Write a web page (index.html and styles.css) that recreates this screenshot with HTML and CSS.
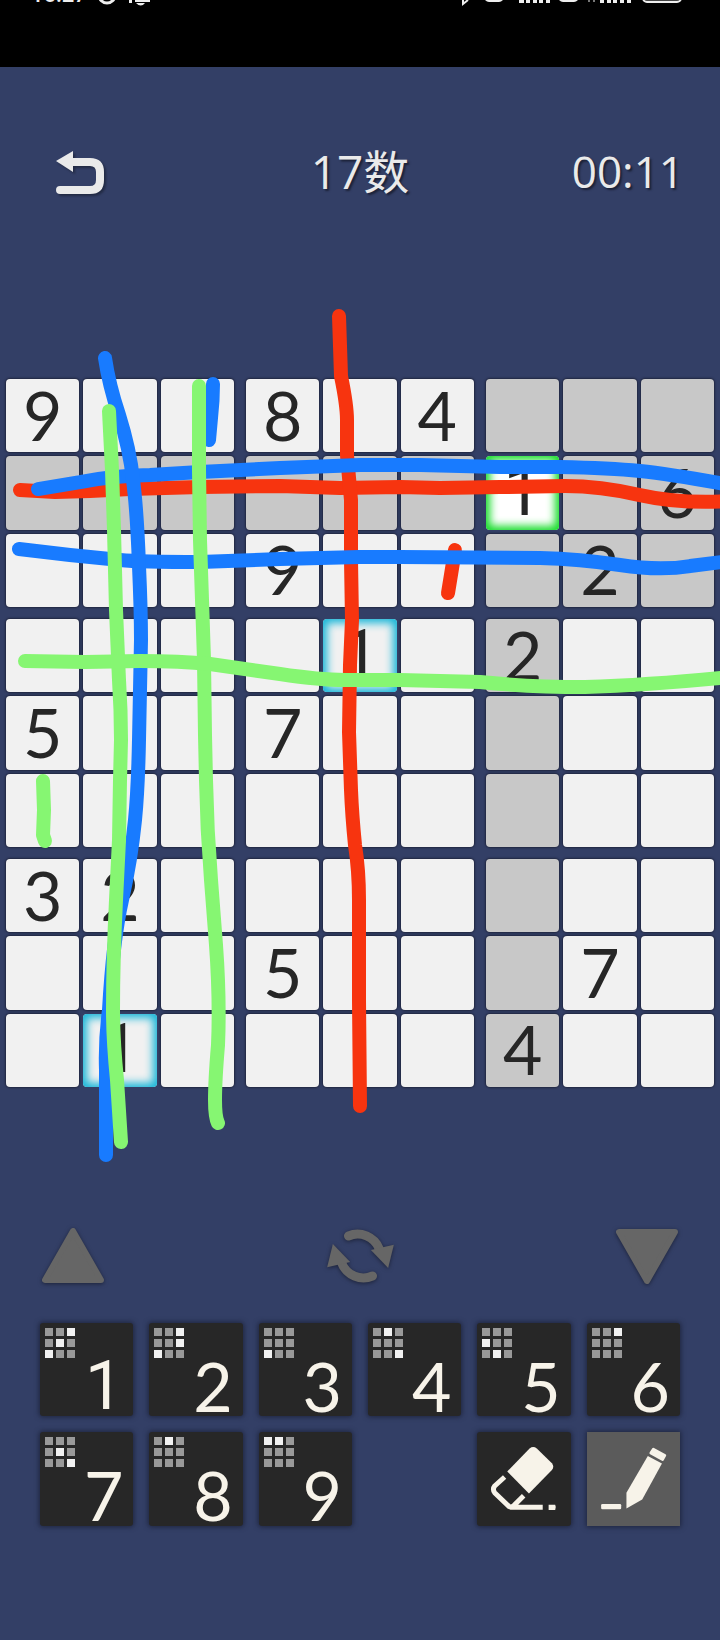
FILE: index.html
```
<!DOCTYPE html>
<html lang="zh">
<head>
    <meta charset="UTF-8">
    <meta name="viewport" content="width=device-width, initial-scale=1.0">
    <title>17数</title>
    <link rel="stylesheet" href="styles.css">
</head>
<body>
    <div class="status-bar">
        <div class="status-group">
            <span class="clock">16:27</span>
            <svg class="status-icons" width="60" height="8" viewBox="0 0 60 8">
                <circle cx="12" cy="-5" r="8" fill="none" stroke="#eee" stroke-width="3"/>
                <path d="M34 0h3v3h-3zM40 0h15v2H40z M41 3h9q-4 5-9 0z" fill="#eee"/>
            </svg>
        </div>
        <svg class="status-icons" width="222" height="8" viewBox="0 0 222 8">
            <path d="M3 0v4l5-4" fill="none" stroke="#eee" stroke-width="2"/>
            <path d="M25 0h18q-2 2-4 2H29q-2 0-4-2zM99 0h19q-2 2-4 2h-11q-2 0-4-2z" fill="#eee"/>
            <path d="M59 0h5v3h-5zM66 0h4v3h-4zM73 0h4v3h-4zM79 0h4v3h-4zM86 0h4v3h-4zM140 0h4v3h-4zM147 0h4v3h-4zM153 0h4v3h-4zM160 0h4v3h-4zM167 0h4v3h-4z" fill="#eee"/>
            <path d="M128 0h2v2h-2zM133 0h2v2h-2z" fill="#777"/>
            <rect x="183" y="-14" width="38" height="16" rx="4" fill="#444" stroke="#eee" stroke-width="2"/>
        </svg>
    </div>

    <header class="top-bar">
        <button class="back" aria-label="返回">
            <svg width="50" height="46" viewBox="0 0 50 46">
                <path d="M14 11H34Q44 11 44 21V29Q44 39 34 39H4" fill="none" stroke="currentColor" stroke-width="8" stroke-linecap="round"/>
                <path d="M0 10L17 0V21Z" fill="currentColor"/>
            </svg>
        </button>
        <h1 class="title">17数</h1>
        <span class="timer">00:11</span>
    </header>

    <main class="board-area">
        <div class="board">
            <div class="block">
                <button class="cell">9</button><button class="cell"></button><button class="cell"></button>
                <button class="cell shaded"></button><button class="cell shaded"></button><button class="cell shaded"></button>
                <button class="cell"></button><button class="cell"></button><button class="cell"></button>
            </div>
            <div class="block">
                <button class="cell">8</button><button class="cell"></button><button class="cell">4</button>
                <button class="cell shaded"></button><button class="cell shaded"></button><button class="cell shaded"></button>
                <button class="cell">9</button><button class="cell"></button><button class="cell"></button>
            </div>
            <div class="block">
                <button class="cell shaded"></button><button class="cell shaded"></button><button class="cell shaded"></button>
                <button class="cell selected one">1</button><button class="cell shaded"></button><button class="cell shaded">6</button>
                <button class="cell shaded"></button><button class="cell shaded">2</button><button class="cell shaded"></button>
            </div>

            <div class="block">
                <button class="cell"></button><button class="cell"></button><button class="cell"></button>
                <button class="cell">5</button><button class="cell"></button><button class="cell"></button>
                <button class="cell"></button><button class="cell"></button><button class="cell"></button>
            </div>
            <div class="block">
                <button class="cell"></button><button class="cell same one">1</button><button class="cell"></button>
                <button class="cell">7</button><button class="cell"></button><button class="cell"></button>
                <button class="cell"></button><button class="cell"></button><button class="cell"></button>
            </div>
            <div class="block">
                <button class="cell shaded">2</button><button class="cell"></button><button class="cell"></button>
                <button class="cell shaded"></button><button class="cell"></button><button class="cell"></button>
                <button class="cell shaded"></button><button class="cell"></button><button class="cell"></button>
            </div>

            <div class="block">
                <button class="cell">3</button><button class="cell">2</button><button class="cell"></button>
                <button class="cell"></button><button class="cell"></button><button class="cell"></button>
                <button class="cell"></button><button class="cell same one">1</button><button class="cell"></button>
            </div>
            <div class="block">
                <button class="cell"></button><button class="cell"></button><button class="cell"></button>
                <button class="cell">5</button><button class="cell"></button><button class="cell"></button>
                <button class="cell"></button><button class="cell"></button><button class="cell"></button>
            </div>
            <div class="block">
                <button class="cell shaded"></button><button class="cell"></button><button class="cell"></button>
                <button class="cell shaded"></button><button class="cell">7</button><button class="cell"></button>
                <button class="cell shaded">4</button><button class="cell"></button><button class="cell"></button>
            </div>
        </div>

        <!-- hand-drawn lines over the board -->
        <svg class="marks" viewBox="0 373 720 720">
            <g class="red">
                <path d="M20 490L55 492L90 491L130 489L200 487L280 486L340 488L400 487L440 488L500 487L565 486Q600 486 640 495T730 501"/>
                <path d="M339 316L341 376Q347 405 347 420V455L351 500V560L352 620L350 665L349 732L351 790Q352 815 355 845Q359 870 359 900V1000L360 1106"/>
                <path d="M455 550L448 593"/>
            </g>
            <g class="blue">
                <path d="M38 489L80 482Q110 476 150 475L200 472L280 468L360 465H420L500 467H560Q610 468 640 471T730 485"/>
                <path d="M19 549L70 555L120 560Q140 562 200 562L280 559L360 557H400L540 558Q580 559 620 565T690 566L730 561"/>
                <path d="M105 358Q109 385 119 415Q130 450 133 480Q137 510 139 566Q141 610 141 640L139 740Q138 790 135 820Q131 860 122 900Q113 940 109 1010Q105 1040 106 1070V1155"/>
                <path d="M213 384Q213 400 211 418L209 440"/>
            </g>
            <g class="green">
                <path d="M109 411L112 470L114 530L116 610L119 680Q121 710 121 740L120 780L119 840L116 900Q113 960 113 1010Q113 1040 117 1080L121 1142"/>
                <path d="M199 386V470L200 540L202 600L204 660L205 735L206 780Q207 830 211 880L216 945Q220 1000 218 1045Q215 1080 215 1100Q215 1117 218 1123"/>
                <path d="M43 781L44 810L43 835L45 841"/>
                <path d="M25 661L85 662L140 661Q180 661 210 664Q245 669 280 674Q320 680 345 680H400L480 682Q530 687 585 687Q650 685 730 677"/>
            </g>
        </svg>
    </main>

    <div class="tools">
        <button class="tool" aria-label="上一个">
            <svg width="64" height="56" viewBox="0 0 64 56">
                <path d="M32 3L4 52H60Z" fill="currentColor" stroke="currentColor" stroke-width="6" stroke-linejoin="round"/>
            </svg>
        </button>
        <button class="tool" aria-label="重置">
            <svg width="67" height="56" viewBox="0 0 200 168">
                <g id="arc">
                    <path d="M64 24A70 70 0 0 1 156 62" fill="none" stroke="currentColor" stroke-width="27" stroke-linecap="round"/>
                    <path d="M131 66L200 50L183 120Z" fill="currentColor"/>
                </g>
                <use href="#arc" transform="rotate(180 100 84)"/>
            </svg>
        </button>
        <button class="tool" aria-label="下一个">
            <svg width="64" height="56" viewBox="0 0 64 56">
                <path d="M32 53L4 4H60Z" fill="currentColor" stroke="currentColor" stroke-width="6" stroke-linejoin="round"/>
            </svg>
        </button>
    </div>

    <div class="keypad">
        <button class="key">
            <span class="mini"><i></i><i></i><i class="on"></i><i></i><i class="on"></i><i></i><i class="on"></i><i></i><i></i></span>
            <span class="num one">1</span>
        </button>
        <button class="key">
            <span class="mini"><i></i><i></i><i class="on"></i><i></i><i></i><i class="on"></i><i class="on"></i><i></i><i></i></span>
            <span class="num">2</span>
        </button>
        <button class="key">
            <span class="mini"><i></i><i></i><i></i><i></i><i></i><i></i><i class="on"></i><i></i><i></i></span>
            <span class="num">3</span>
        </button>
        <button class="key">
            <span class="mini"><i></i><i class="on"></i><i></i><i></i><i></i><i></i><i></i><i></i><i class="on"></i></span>
            <span class="num">4</span>
        </button>
        <button class="key">
            <span class="mini"><i></i><i></i><i></i><i class="on"></i><i></i><i></i><i></i><i class="on"></i><i></i></span>
            <span class="num">5</span>
        </button>
        <button class="key">
            <span class="mini"><i></i><i></i><i class="on"></i><i></i><i></i><i></i><i></i><i></i><i></i></span>
            <span class="num">6</span>
        </button>
        <button class="key">
            <span class="mini"><i></i><i></i><i></i><i></i><i class="on"></i><i></i><i></i><i></i><i class="on"></i></span>
            <span class="num">7</span>
        </button>
        <button class="key">
            <span class="mini"><i></i><i class="on"></i><i></i><i></i><i></i><i></i><i></i><i></i><i></i></span>
            <span class="num">8</span>
        </button>
        <button class="key">
            <span class="mini"><i class="on"></i><i class="on"></i><i></i><i></i><i></i><i></i><i></i><i></i><i></i></span>
            <span class="num">9</span>
        </button>
        <button class="key eraser" aria-label="橡皮">
            <svg viewBox="0 0 284 284">
                <path d="M92 120L160 50Q171 42 182 50L228 95Q236 106 228 116L158 187Z" fill="currentColor"/>
                <path d="M84 137L54 164Q46 174 54 185L98 227Q104 230 112 224L142 194M100 229H200" fill="none" stroke="currentColor" stroke-width="15"/>
                <path d="M218 221H238Q242 229 238 237H218Z" fill="currentColor"/>
            </svg>
        </button>
        <button class="key active" aria-label="铅笔">
            <svg viewBox="0 0 284 284">
                <path d="M185 73L228 96L168 205L120 233V185Z" fill="currentColor"/>
                <path d="M202 52L237 71L230 84L194 64Z" fill="currentColor" stroke="currentColor" stroke-width="8" stroke-linejoin="round"/>
                <rect x="43" y="219" width="61" height="16" rx="4" fill="currentColor"/>
            </svg>
        </button>
    </div>
</body>
</html>
```
FILE: styles.css
```
* {
    box-sizing: border-box;
}
body {
    margin: 0;
    min-height: 100vh;
    background-color: #333f66;
    font-family: Lato, "Noto Sans CJK SC", sans-serif;
    overflow-x: hidden;
}
button {
    border: none;
    padding: 0;
    margin: 0;
    background: none;
    font-family: inherit;
    cursor: pointer;
}
svg {
    display: block;
}

/* Status bar, cut off by the top of the screen */
.status-bar {
    height: 67px;
    padding: 0 38px 0 31px;
    background-color: #000;
    display: flex;
    justify-content: space-between;
    align-items: flex-start;
}
.status-group {
    display: flex;
    align-items: flex-start;
    gap: 8px;
}
.clock {
    margin-top: -17px;
    color: #eee;
    font-family: Roboto, sans-serif;
    font-size: 22px;
    font-weight: 500;
    line-height: 24px;
}

.top-bar {
    display: grid;
    grid-template-columns: 1fr auto 1fr;
    align-items: center;
    height: 306px;
    padding: 0 36px 98px;
    color: #eaeaea;
}
.back {
    width: 50px;
    margin: 6px 0 0 20px;
    color: #eaeaea;
    filter: drop-shadow(2px 2px 1px #222a44);
}
.title {
    margin: 0;
    font-family: "Open Sans", "Noto Sans CJK SC", sans-serif;
    font-size: 46px;
    font-weight: 400;
    line-height: 60px;
    text-shadow: 2px 2px 2px #1c2238;
}
.timer {
    justify-self: end;
    font-family: "Open Sans", sans-serif;
    font-size: 44px;
    line-height: 60px;
    text-shadow: 2px 2px 2px #1c2238;
}

/* Board */
.board-area {
    position: relative;
    padding: 6px;
}
.board {
    display: grid;
    grid-template-columns: repeat(3, 1fr);
    gap: 12px;
}
.block {
    display: grid;
    grid-template-columns: repeat(3, 1fr);
    gap: 4px;
}
.cell {
    aspect-ratio: 1;
    min-width: 0;
    padding-bottom: 2px;
    border-radius: 4px;
    background-color: #f1f1f1;
    box-shadow: 0 0 2px 1px #20263f;
    color: #262626;
    font-size: 68px;
    line-height: 68px;
}
.cell.shaded {
    background-color: #c8c8c8;
}
.cell.selected {
    background-color: #fff;
    box-shadow: inset 0 0 9px 4px #14dc28;
}
.cell.same {
    box-shadow: inset 0 0 9px 4px #18b6d8;
}
.one {
    font-family: Roboto, sans-serif;
}

.marks {
    position: absolute;
    top: 0;
    left: 0;
    width: 100%;
    height: 100%;
    overflow: visible;
    pointer-events: none;
    fill: none;
    stroke-width: 14;
    stroke-linecap: round;
    stroke-linejoin: round;
}
.red {
    stroke: #f7340f;
}
.blue {
    stroke: #187bff;
}
.green {
    stroke: #86f672;
}

/* Navigation buttons */
.tools {
    display: flex;
    justify-content: space-between;
    margin: 135px 41px 39px;
}
.tool {
    color: #666;
    filter: drop-shadow(0 1px 2px #1c2238);
}

/* Number keys */
.keypad {
    display: grid;
    grid-template-columns: repeat(6, 1fr);
    gap: 16px;
    padding: 0 40px 40px;
}
.key {
    aspect-ratio: 1;
    display: flex;
    flex-direction: column;
    justify-content: flex-start;
    min-width: 0;
    border-radius: 3px;
    background-color: #272727;
    box-shadow: 0 0 5px 1px #1e253e;
    color: #f7f3e9;
}
.key.eraser {
    grid-column: 5;
}
.key.active {
    border-radius: 0;
    background-color: #5b5b5b;
}
.key svg {
    width: 100%;
}
.mini {
    display: grid;
    grid-template-columns: repeat(3, 8px);
    gap: 3px;
    padding: 5px;
}
.mini i {
    height: 8px;
    background-color: #999;
}
.mini i.on {
    background-color: #f1f1f1;
}
.num {
    align-self: flex-end;
    padding-right: 10px;
    font-size: 68px;
    line-height: 46px;
}
```
